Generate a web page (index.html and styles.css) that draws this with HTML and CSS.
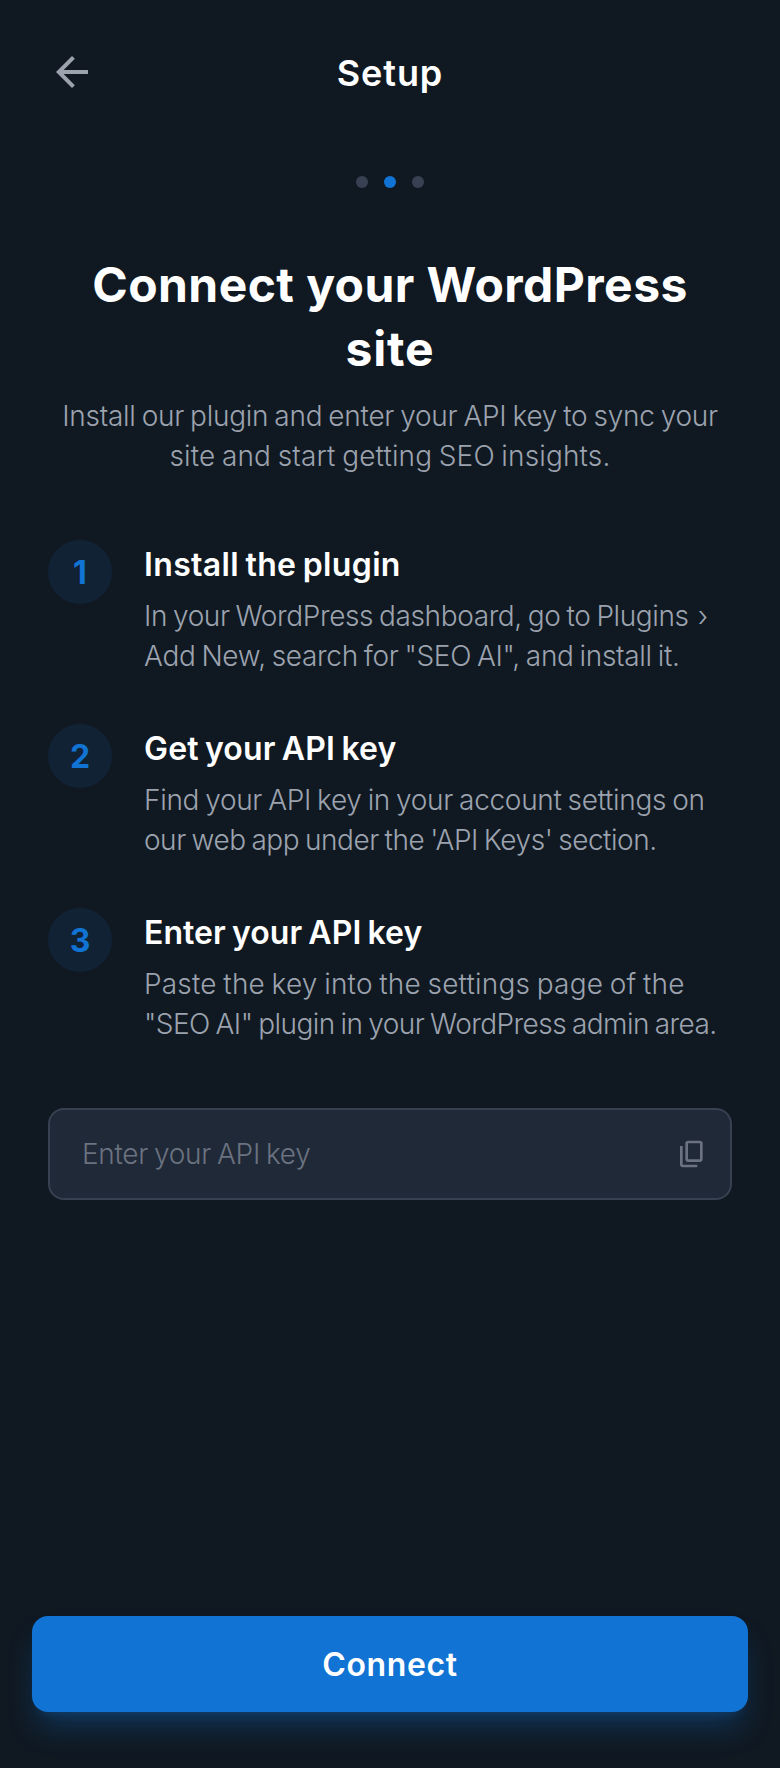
FILE: index.html
```html
<!DOCTYPE html>
<html lang="en">
<head>
<meta charset="utf-8">
<title>Setup</title>
<link rel="stylesheet" href="styles.css">
</head>
<body>
<div class="screen">
  <header class="header">
    <svg class="back-icon" viewBox="0 -960 960 960" fill="currentColor" aria-label="Back"><path d="m313-440 224 224-57 56-320-320 320-320 57 56-224 224h487v80H313Z"/></svg>
    <h1 class="header-title">Setup</h1>
    <span class="header-spacer"></span>
  </header>
  <div class="dots">
    <span class="dot"></span><span class="dot dot-active"></span><span class="dot"></span>
  </div>
  <main class="main">
    <h2 class="headline"><span class="line headline-1">Connect your WordPress</span><span class="line headline-2">site</span></h2>
    <p class="intro"><span class="line intro-1">Install our plugin and enter your API key to sync your</span><span class="line intro-2">site and start getting SEO insights.</span></p>
    <ol class="steps">
      <li class="step">
        <span class="step-number">1</span>
        <div>
          <h3 class="step-title title-1">Install the plugin</h3>
          <p class="step-text"><span class="line text-1a">In your WordPress dashboard, go to Plugins <span class="chevron">›</span></span><span class="line text-1b">Add New, search for "SEO AI", and install it.</span></p>
        </div>
      </li>
      <li class="step">
        <span class="step-number">2</span>
        <div>
          <h3 class="step-title title-2">Get your API key</h3>
          <p class="step-text"><span class="line text-2a">Find your API key in your account settings on</span><span class="line text-2b">our web app under the 'API Keys' section.</span></p>
        </div>
      </li>
      <li class="step">
        <span class="step-number">3</span>
        <div>
          <h3 class="step-title title-3">Enter your API key</h3>
          <p class="step-text"><span class="line text-3a">Paste the key into the settings page of the</span><span class="line text-3b">"SEO AI" plugin in your WordPress admin area.</span></p>
        </div>
      </li>
    </ol>
    <div class="field">
      <span class="placeholder">Enter your API key</span>
      <svg class="copy-icon" viewBox="0 -960 960 960" fill="currentColor"><path d="M360-240q-33 0-56.5-23.5T280-320v-480q0-33 23.5-56.5T360-880h360q33 0 56.5 23.5T800-800v480q0 33-23.5 56.5T720-240H360Zm0-80h360v-480H360v480ZM200-80q-33 0-56.5-23.5T120-160v-560h80v560h440v80H200Z"/></svg>
    </div>
  </main>
  <footer class="footer"><button class="connect">Connect</button></footer>
</div>
</body>
</html>
```
FILE: styles.css
```css
* { box-sizing: border-box; margin: 0; padding: 0; }
body { background: #101922; font-family: Inter, "Liberation Sans", sans-serif; }
.screen { display: flex; flex-direction: column; width: 780px; height: 1768px; background: #101922; overflow: hidden; }
.header { display: flex; align-items: center; justify-content: space-between; height: 144px; padding: 0 48px; }
.back-icon { width: 48px; height: 48px; color: #9ca3af; }
.header-title { padding-top: 2px; font-size: 36px; line-height: 56px; font-weight: 600; letter-spacing: 0.9px; color: #fff; white-space: nowrap; }
.header-spacer { width: 48px; }
.dots { display: flex; justify-content: center; gap: 16px; padding: 32px 0 65px; }
.dot { width: 12px; height: 12px; border-radius: 50%; background: #374151; }
.dot-active { background: #1173d4; }
.main { flex: 1; padding: 0 48px; }
.line { display: block; height: 40px; white-space: nowrap; }
.headline { display: flex; flex-direction: column; align-items: center; font-size: 48px; line-height: 64px; font-weight: 700; color: #fff; }
.headline .line { height: 64px; }
.headline-1 { letter-spacing: 0.43px; }
.headline-2 { letter-spacing: 0.9px; }
.intro { display: flex; flex-direction: column; align-items: center; margin-top: 15px; font-size: 28px; line-height: 40px; font-weight: 300; word-spacing: -1.5px; color: #9ca3af; }
.intro-1 { letter-spacing: -0.27px; }
.intro-2 { letter-spacing: 0.15px; }
.steps { display: flex; flex-direction: column; gap: 48px; margin-top: 64px; list-style: none; }
.step { display: flex; gap: 32px; height: 136px; }
.step-number { display: flex; flex: none; align-items: center; justify-content: center; width: 64px; height: 64px; border-radius: 50%; background: rgba(17, 115, 212, 0.1); color: #1173d4; font-size: 32px; font-weight: 700; }
.step-title { padding-top: 1px; font-size: 32px; line-height: 48px; font-weight: 600; word-spacing: -2px; color: #fff; white-space: nowrap; }
.title-1 { letter-spacing: 0.35px; }
.title-2 { letter-spacing: 0.17px; }
.title-3 { letter-spacing: 0.06px; }
.step-text { margin-top: 7px; font-size: 28px; line-height: 40px; font-weight: 300; word-spacing: -1.5px; color: #9ca3af; }
.text-1a { letter-spacing: -0.39px; }
.text-1b { letter-spacing: -0.34px; }
.text-2a { letter-spacing: -0.31px; }
.text-2b { letter-spacing: -0.48px; }
.text-3a { letter-spacing: 0.2px; }
.text-3b { letter-spacing: -0.55px; }
.chevron { margin-left: 3px; }
.field { display: flex; align-items: center; justify-content: space-between; height: 92px; margin-top: 64px; padding: 0 22px 0 32px; border: 2px solid #374151; border-radius: 16px; background: #1f2937; color: #6b7280; }
.placeholder { font-size: 28px; line-height: 40px; font-weight: 300; letter-spacing: -0.31px; word-spacing: -1.5px; white-space: nowrap; }
.copy-icon { width: 32px; height: 32px; }
.footer { padding: 0 32px 56px; }
.connect { display: block; width: 100%; height: 96px; padding-top: 2px; border: 0; border-radius: 16px; background: #1173d4; color: #fff; font: 600 32px/48px Inter, "Liberation Sans", sans-serif; letter-spacing: 0.6px; box-shadow: 0 20px 30px -6px rgba(17, 115, 212, 0.3), 0 8px 12px -8px rgba(17, 115, 212, 0.3); }
```
